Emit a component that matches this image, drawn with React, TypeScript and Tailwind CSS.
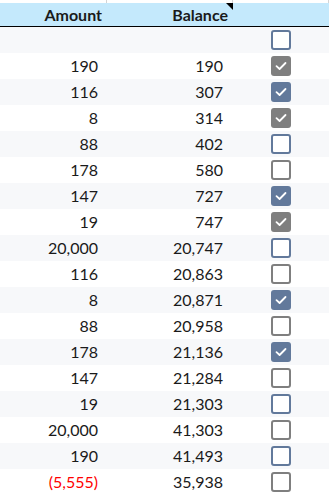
const rows: { amount: string; balance: string; checked: boolean; tone: "blue" | "gray"; neg?: boolean }[] = [
  { amount: "", balance: "", checked: false, tone: "blue" },
  { amount: "190", balance: "190", checked: true, tone: "gray" },
  { amount: "116", balance: "307", checked: true, tone: "blue" },
  { amount: "8", balance: "314", checked: true, tone: "gray" },
  { amount: "88", balance: "402", checked: false, tone: "blue" },
  { amount: "178", balance: "580", checked: false, tone: "gray" },
  { amount: "147", balance: "727", checked: true, tone: "blue" },
  { amount: "19", balance: "747", checked: true, tone: "gray" },
  { amount: "20,000", balance: "20,747", checked: false, tone: "blue" },
  { amount: "116", balance: "20,863", checked: false, tone: "gray" },
  { amount: "8", balance: "20,871", checked: true, tone: "blue" },
  { amount: "88", balance: "20,958", checked: false, tone: "gray" },
  { amount: "178", balance: "21,136", checked: true, tone: "blue" },
  { amount: "147", balance: "21,284", checked: false, tone: "gray" },
  { amount: "19", balance: "21,303", checked: false, tone: "blue" },
  { amount: "20,000", balance: "41,303", checked: false, tone: "gray" },
  { amount: "190", balance: "41,493", checked: false, tone: "blue" },
  { amount: "(5,555)", balance: "35,938", checked: false, tone: "gray", neg: true },
];

function Check({ checked, tone }: { checked: boolean; tone: "blue" | "gray" }) {
  const color = tone === "blue" ? "#62799b" : "#7f7f7f";
  if (checked) {
    return (
      <div className="w-5 h-5 rounded-[3px] flex items-center justify-center" style={{ background: color }}>
        <svg width="14" height="14" viewBox="0 0 14 14" fill="none">
          <path d="M2.5 7.2 L5.6 10 L11.5 4" stroke="white" strokeWidth="1.8" strokeLinecap="round" strokeLinejoin="round" />
        </svg>
      </div>
    );
  }
  return <div className="w-5 h-5 rounded-[3px] border-2 bg-white" style={{ borderColor: color }} />;
}

export default function App() {
  return (
    <div className="w-[333px] h-[495px] overflow-hidden bg-white text-[#1a1a1a]" style={{ fontFamily: "Lato, 'Liberation Sans', sans-serif" }}>
      {/* top grid strip */}
      <div className="h-[3px] w-[329px] grid grid-cols-[107px_126px_96px]">
        <div className="border-r border-[#d4d4d4]" />
        <div className="border-r border-[#d4d4d4]" />
        <div className="border-r border-[#d4d4d4]" />
      </div>

      {/* header */}
      <div className="w-[329px] h-[24px] bg-[#c4e9fc] border-b border-black grid grid-cols-[107px_126px_96px] text-[16px] font-bold leading-none">
        <div className="flex items-center justify-end pr-[5px]">Amount</div>
        <div className="relative flex items-center justify-end pr-[5px]">
          Balance
          <div className="absolute right-0 top-0 w-0 h-0 border-t-[7px] border-t-black border-l-[7px] border-l-transparent" />
        </div>
        <div />
      </div>

      {/* rows */}
      {rows.map((r, i) => (
        <div
          key={i}
          className={`w-[329px] h-[26px] grid grid-cols-[107px_126px_96px] text-[16px] leading-none ${i % 2 === 0 ? "bg-[#f7f8fa]" : "bg-white"}`}
        >
          <div className={`flex items-center justify-end pr-[9px] ${r.neg ? "text-[#ff0000]" : ""}`}>{r.amount}</div>
          <div className="flex items-center justify-end pr-[10px]">{r.balance}</div>
          <div className="flex items-center justify-center">
            <Check checked={r.checked} tone={r.tone} />
          </div>
        </div>
      ))}
    </div>
  );
}
